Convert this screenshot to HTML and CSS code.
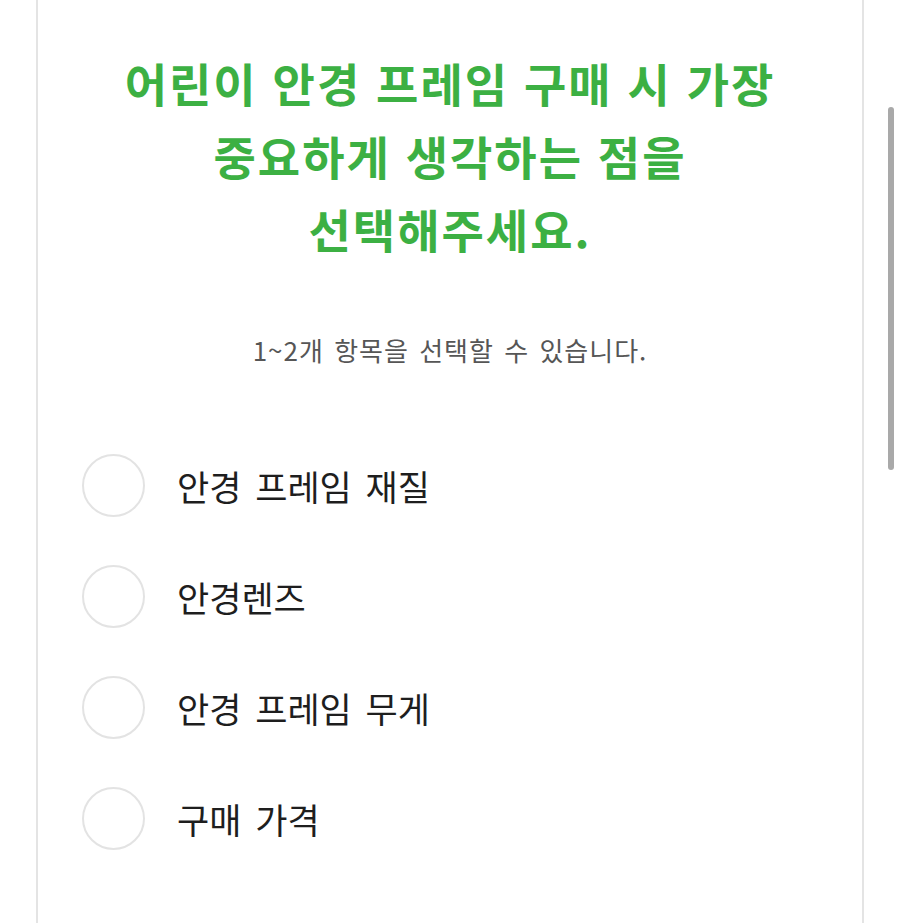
FILE: index.html
```html
<!DOCTYPE html>
<html lang="ko">
<head>
    <meta charset="UTF-8">
    <meta name="viewport" content="width=device-width, initial-scale=1.0">
    <title>설문</title>
    <link rel="stylesheet" href="styles.css">
</head>
<body>

<div class="카드">
    <h1 class="질문">어린이 안경 프레임 구매 시 가장<br>중요하게 생각하는 점을<br>선택해주세요.</h1>

    <p class="안내">1~2개 항목을 선택할 수 있습니다.</p>

    <ul class="보기목록">
        <li class="보기"><span class="동그라미"></span><span class="보기글">안경 프레임 재질</span></li>
        <li class="보기"><span class="동그라미"></span><span class="보기글">안경렌즈</span></li>
        <li class="보기"><span class="동그라미"></span><span class="보기글">안경 프레임 무게</span></li>
        <li class="보기"><span class="동그라미"></span><span class="보기글">구매 가격</span></li>
    </ul>
</div>

<div class="스크롤바"></div>

</body>
</html>
```

FILE: styles.css
```css
body {
    margin: 0;
    background: #ffffff;
    font-family: "Noto Sans CJK KR", "Noto Sans", sans-serif;
    height: 923px;
    overflow: hidden;
}

.카드 {
    margin-left: 36px;
    width: 824px;
    height: 923px;
    border-left: 2px solid #e4e4e4;
    border-right: 2px solid #e4e4e4;
    box-sizing: content-box;
}

.질문 {
    margin: 0;
    padding-top: 46px;
    text-align: center;
    color: #3cb043;
    font-size: 46px;
    font-weight: 700;
    line-height: 73px;
    letter-spacing: 2px;
    word-spacing: 0;
}

.안내 {
    margin: 67px 0 0;
    text-align: center;
    color: #565656;
    font-size: 26px;
    line-height: 36px;
    letter-spacing: 1px;
    word-spacing: 2px;
}

.보기목록 {
    list-style: none;
    margin: 62px 0 0;
    padding: 0 0 0 44px;
}

.보기 {
    display: flex;
    align-items: center;
    height: 111px;
}

.동그라미 {
    width: 59px;
    height: 59px;
    border: 2px solid #e3e3e3;
    border-radius: 50%;
    flex-shrink: 0;
}

.보기글 {
    margin-left: 32px;
    color: #1e1e1e;
    font-size: 35px;
    letter-spacing: 0;
    word-spacing: 4px;
}

.스크롤바 {
    position: absolute;
    left: 888px;
    top: 107px;
    width: 6px;
    height: 363px;
    border-radius: 3px;
    background: #a9a9a9;
}
```
